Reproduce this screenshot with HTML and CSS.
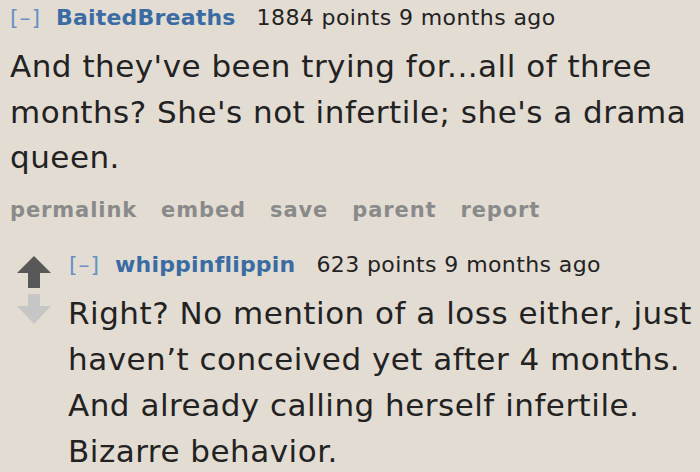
FILE: index.html
```html
<!DOCTYPE html>
<html>
<head>
<meta charset="utf-8">
<link rel="stylesheet" href="styles.css">
</head>
<body>
<div class="comment first">
  <div class="entry">
    <p class="tagline"><span class="expand">[–]</span><span class="author">BaitedBreaths</span><span class="score">1884 points</span> <span class="time">9 months ago</span></p>
    <div class="md">And they've been trying for...all of three months? She's not infertile; she's a drama queen.</div>
    <ul class="buttons">
      <li>permalink</li><li>embed</li><li>save</li><li>parent</li><li>report</li>
    </ul>
  </div>
</div>
<div class="comment second">
  <div class="midcol">
    <svg class="arrow up" width="34" height="32" viewBox="0 0 34 32"><path d="M17 0 L34 17 L23 17 L23 32 L11 32 L11 17 L0 17 Z" fill="#585858"/></svg>
    <svg class="arrow down" width="34" height="30" viewBox="0 0 34 30"><path d="M11 0 L23 0 L23 12 L34 12 L17 30 L0 12 L11 12 Z" fill="#c6c6c6"/></svg>
  </div>
  <div class="entry">
    <p class="tagline"><span class="expand">[–]</span><span class="author">whippinflippin</span><span class="score">623 points</span> <span class="time">9 months ago</span></p>
    <div class="md">Right? No mention of a loss either, just haven’t conceived yet after 4 months. And already calling herself infertile. Bizarre behavior.</div>
  </div>
</div>
</body>
</html>
```
FILE: styles.css
```css
html, body {
  margin: 0;
  padding: 0;
  background: #e3dcd3;
}
body {
  font-family: "DejaVu Sans", Verdana, sans-serif;
  color: #222;
  width: 700px;
  height: 472px;
  overflow: hidden;
}
.comment {
  display: flex;
}
.first {
  padding-left: 10px;
}
.tagline {
  margin: 0;
  font-size: 22px;
  line-height: 36px;
  letter-spacing: 0.4px;
  color: #222;
  white-space: nowrap;
}
.expand {
  display: inline-block;
  width: 33px;
  margin-right: 13px;
  color: #6790c4;
  letter-spacing: 1px;
}
.author {
  color: #3a6ca3;
  font-weight: bold;
  letter-spacing: 0.2px;
  margin-right: 21px;
}
.md {
  font-size: 31px;
  line-height: 45.5px;
  letter-spacing: 0.5px;
}
.first .md {
  margin-top: 8px;
  width: 686px;
}
.buttons {
  list-style: none;
  margin: 14px 0 0;
  padding: 0;
  display: flex;
  gap: 24px;
  font-size: 21px;
  line-height: 30px;
  letter-spacing: 0.9px;
  font-weight: bold;
  color: #8a8a8a;
}
.second {
  margin-top: 22px;
  padding-left: 17px;
}
.midcol {
  display: flex;
  flex-direction: column;
  gap: 6px;
  padding-top: 9px;
  width: 51px;
  flex: none;
}
.second .entry {
  width: 630px;
}
.second .tagline {
  padding-left: 1px;
}
.second .md {
  margin-top: 7px;
  line-height: 46px;
}
```
